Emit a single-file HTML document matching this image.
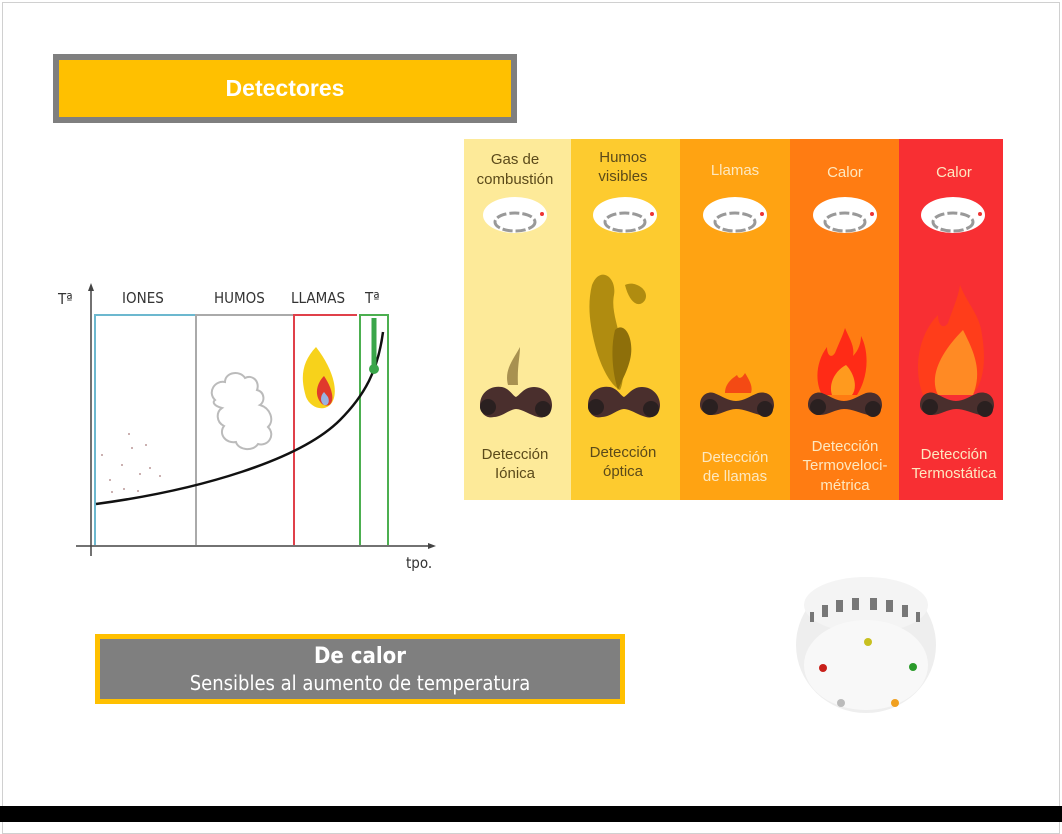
<!DOCTYPE html>
<html><head><meta charset="utf-8"><style>
body{margin:0;width:1062px;height:822px;background:#fff;position:relative;overflow:hidden;font-family:"Liberation Sans",sans-serif}
.frame{position:absolute;left:2px;top:2px;width:1056px;height:830px;border:1px solid #d0d0d0}
.title{position:absolute;left:53px;top:54px;width:452px;height:57px;background:#FFC000;border:6px solid #7f7f7f;color:#fff;font-weight:bold;font-size:23px;text-align:center;line-height:57px}
.sub{position:absolute;left:95px;top:634px;width:520px;background:#7f7f7f;border:5px solid #FFC000;color:#fff;text-align:center;font-family:"DejaVu Sans Condensed","DejaVu Sans",sans-serif;font-size:20px;line-height:27px;padding-top:4px;height:56px}
.bar{position:absolute;left:0;top:806px;width:1062px;height:16px;background:#000}
</style></head><body>
<div class="frame"></div>
<div class="title">Detectores</div>
<svg style="position:absolute;left:0;top:0" width="1062" height="822">
<g font-family="DejaVu Sans Condensed,DejaVu Sans,sans-serif" font-size="15" fill="#333">
<text x="58" y="304">Tª</text><text x="122" y="303">IONES</text><text x="214" y="303">HUMOS</text><text x="291" y="303">LLAMAS</text><text x="365" y="303">Tª</text><text x="406" y="568">tpo.</text>
</g>
<line x1="91" y1="286" x2="91" y2="556" stroke="#444" stroke-width="1.5"/>
<polygon points="91,283 88,291 94,291" fill="#444"/>
<line x1="76" y1="546" x2="432" y2="546" stroke="#444" stroke-width="1.5"/>
<polygon points="436,546 428,543 428,549" fill="#444"/>
<path d="M95,545V315H195" fill="none" stroke="#6cb8cf" stroke-width="2"/>
<path d="M196,545V315H293" fill="none" stroke="#aaa" stroke-width="2"/>
<path d="M294,545V315H357" fill="none" stroke="#e0404a" stroke-width="2"/>
<path d="M360,545V315H388V545" fill="none" stroke="#4caf50" stroke-width="2"/>
<path d="M96,504 C200,490 300,460 340,420 C365,395 378,370 383,332" fill="none" stroke="#111" stroke-width="2.5"/>
<line x1="374" y1="318" x2="374" y2="366" stroke="#3aa64a" stroke-width="5"/>
<circle cx="374" cy="369" r="5" fill="#3aa64a"/>
<g fill="#b99"><circle cx="102" cy="455" r="1"/><circle cx="122" cy="465" r="1"/><circle cx="132" cy="448" r="1"/><circle cx="110" cy="480" r="1"/><circle cx="140" cy="474" r="1"/><circle cx="150" cy="468" r="1"/><circle cx="112" cy="492" r="1"/><circle cx="124" cy="489" r="1"/><circle cx="138" cy="491" r="1"/><circle cx="160" cy="476" r="1"/><circle cx="129" cy="434" r="1"/><circle cx="146" cy="445" r="1"/></g>
<path d="M215,400c-8-8 0-20 10-18c0-10 15-12 20-4c8-4 15 4 12 12c8 2 8 12 3 15c10 3 15 15 8 22c8 8 0 20-10 17c-5 8-20 6-22-2c-10 2-18-8-12-16c-8-4-8-14-2-18c-8-2-10-6-7-8z" fill="none" stroke="#bbb" stroke-width="2"/>
<path d="M316,347c-14,15-16,30-10,50c4,10 16,15 24,8c10-10 4-35-14-58z" fill="#f7d21b"/>
<path d="M324,376c-8,8-10,20-2,28c6,4 12,0 10-10c-1-6-4-12-8-18z" fill="#e03a2c"/>
<path d="M324,392c-4,4-4,10 0,13c4,1 6-3 4-8z" fill="#9ab3e0"/>
<rect x="464" y="139" width="107" height="361" fill="#FDEA99"/>
<rect x="571" y="139" width="109" height="361" fill="#FDCB2F"/>
<rect x="680" y="139" width="110" height="361" fill="#FFA312"/>
<rect x="790" y="139" width="109" height="361" fill="#FF7C12"/>
<rect x="899" y="139" width="104" height="361" fill="#F82F33"/>
<g>
<g transform="translate(515,0)"><ellipse cx="0" cy="215" rx="32" ry="18" fill="#fff"/><ellipse cx="0" cy="222" rx="20" ry="9" fill="none" stroke="#999" stroke-width="3" stroke-dasharray="10 3"/><circle cx="27" cy="214" r="2" fill="#e33"/></g>
<g transform="translate(625,0)"><ellipse cx="0" cy="215" rx="32" ry="18" fill="#fff"/><ellipse cx="0" cy="222" rx="20" ry="9" fill="none" stroke="#999" stroke-width="3" stroke-dasharray="10 3"/><circle cx="27" cy="214" r="2" fill="#e33"/></g>
<g transform="translate(735,0)"><ellipse cx="0" cy="215" rx="32" ry="18" fill="#fff"/><ellipse cx="0" cy="222" rx="20" ry="9" fill="none" stroke="#999" stroke-width="3" stroke-dasharray="10 3"/><circle cx="27" cy="214" r="2" fill="#e33"/></g>
<g transform="translate(845,0)"><ellipse cx="0" cy="215" rx="32" ry="18" fill="#fff"/><ellipse cx="0" cy="222" rx="20" ry="9" fill="none" stroke="#999" stroke-width="3" stroke-dasharray="10 3"/><circle cx="27" cy="214" r="2" fill="#e33"/></g>
<g transform="translate(953,0)"><ellipse cx="0" cy="215" rx="32" ry="18" fill="#fff"/><ellipse cx="0" cy="222" rx="20" ry="9" fill="none" stroke="#999" stroke-width="3" stroke-dasharray="10 3"/><circle cx="27" cy="214" r="2" fill="#e33"/></g>
</g>
<path d="M508,385c-4-15 5-25 12-38c0,10-3,20-2,38z" fill="#a89150"/>
<path d="M592,285c8-20 25-8 22,10c-3,15 4,30 6,45c3,20 5,40 0,50c-10-5-20-25-25-45c-5-20-8-40-3-60z" fill="#b08c10"/>
<path d="M625,285c10-5 25,5 20,15c-5,8-15,5-20-15z" fill="#b08c10"/>
<path d="M615,330c10-10 20,10 15,30c-3,12-8,20-12,30c-5-15-8-40-3-60z" fill="#8e6f0a"/>
<path d="M725,393c0-10 8-15 12-18c2,5 5,3 8-2c5,8 8,14 6,20z" fill="#f44a14"/>
<path d="M822,395c-8-15-5-35 5-48c0,8 4,12 8,6c4-10 8-18 10-25c4,10 10,18 8,28c6-6 8-14 8-20c8,15 8,40-4,59z" fill="#ff2b16"/>
<path d="M832,395c-4-12 4-25 14-30c8,8 12,22 6,30z" fill="#ff9a1e"/>
<path d="M923,395c-10-25-5-60 15-80c0,10 5,15 10,8c5-15 10-25 12-38c8,20 20,30 22,50c5,30 0,50-10,60z" fill="#ff3d1a"/>
<path d="M938,395c-10-20 5-45 25-65c10,20 20,40 10,65z" fill="#ff8a24"/>
<g fill="#4a2f2d">
<path d="M480,405c0-12 10-20 22-18c8,2 10,8 14,10c4-2 8-10 18-10c10,0 18,8 18,18c0,10-8,14-14,12c-8-2-16-8-22-8c-6,0-14,8-22,8c-8,2-14-4-14-12z"/>
<path d="M588,405c0-12 10-20 22-18c8,2 10,8 14,10c4-2 8-10 18-10c10,0 18,8 18,18c0,10-8,14-14,12c-8-2-16-8-22-8c-6,0-14,8-22,8c-8,2-14-4-14-12z"/>
<path d="M700,405c0-10 8-14 14-12c8,3 14,8 22,8c8,0 14-5 22-8c8-2 16,2 16,12c0,8-8,12-14,10c-8-2-16-6-24-6c-8,0-16,6-24,6c-6,0-12-4-12-10z"/>
<path d="M808,405c0-10 8-14 14-12c8,3 14,8 22,8c8,0 14-5 22-8c8-2 16,2 16,12c0,8-8,12-14,10c-8-2-16-6-24-6c-8,0-16,6-24,6c-6,0-12-4-12-10z"/>
<path d="M920,405c0-10 8-14 14-12c8,3 14,8 22,8c8,0 14-5 22-8c8-2 16,2 16,12c0,8-8,12-14,10c-8-2-16-6-24-6c-8,0-16,6-24,6c-6,0-12-4-12-10z"/>
</g>
<g fill="#2a2020">
<circle cx="488" cy="407" r="8"/><circle cx="543" cy="409" r="8"/>
<circle cx="596" cy="407" r="8"/><circle cx="651" cy="409" r="8"/>
<circle cx="710" cy="407" r="8"/><circle cx="765" cy="409" r="8"/>
<circle cx="818" cy="407" r="8"/><circle cx="873" cy="409" r="8"/>
<circle cx="930" cy="407" r="8"/><circle cx="985" cy="409" r="8"/>
</g>
<g font-family="Liberation Sans,sans-serif" font-size="15" text-anchor="middle">
<g fill="#5b4a1a"><text x="515" y="164">Gas de</text><text x="515" y="184">combustión</text><text x="515" y="459">Detección</text><text x="515" y="478">Iónica</text>
<text x="623" y="162">Humos</text><text x="623" y="181">visibles</text><text x="623" y="457">Detección</text><text x="623" y="476">óptica</text></g>
<g fill="#fde8c0"><text x="735" y="175">Llamas</text><text x="735" y="462">Detección</text><text x="735" y="481">de llamas</text>
<text x="845" y="177">Calor</text><text x="845" y="451">Detección</text><text x="845" y="470">Termoveloci-</text><text x="845" y="490">métrica</text>
<text x="954" y="177">Calor</text><text x="954" y="459">Detección</text><text x="954" y="478">Termostática</text></g>
</g>
<ellipse cx="866" cy="645" rx="70" ry="68" fill="#eee"/>
<ellipse cx="866" cy="605" rx="62" ry="28" fill="#f4f4f4"/>
<g fill="#777"><rect x="822" y="605" width="6" height="12"/><rect x="836" y="600" width="7" height="12"/><rect x="852" y="598" width="7" height="12"/><rect x="870" y="598" width="7" height="12"/><rect x="886" y="600" width="7" height="12"/><rect x="902" y="605" width="6" height="12"/><rect x="810" y="612" width="4" height="10"/><rect x="916" y="612" width="4" height="10"/></g>
<ellipse cx="866" cy="665" rx="62" ry="45" fill="#f8f8f8"/>
<circle cx="868" cy="642" r="4" fill="#c8c020"/><circle cx="823" cy="668" r="4" fill="#c8201a"/><circle cx="913" cy="667" r="4" fill="#2a9a2a"/><circle cx="895" cy="703" r="4" fill="#f0a020"/><circle cx="841" cy="703" r="4" fill="#bbb"/>
</svg>
<div class="sub"><b style="font-size:22px">De calor</b><br>Sensibles al aumento de temperatura</div>
<div class="bar"></div>
</body></html>
